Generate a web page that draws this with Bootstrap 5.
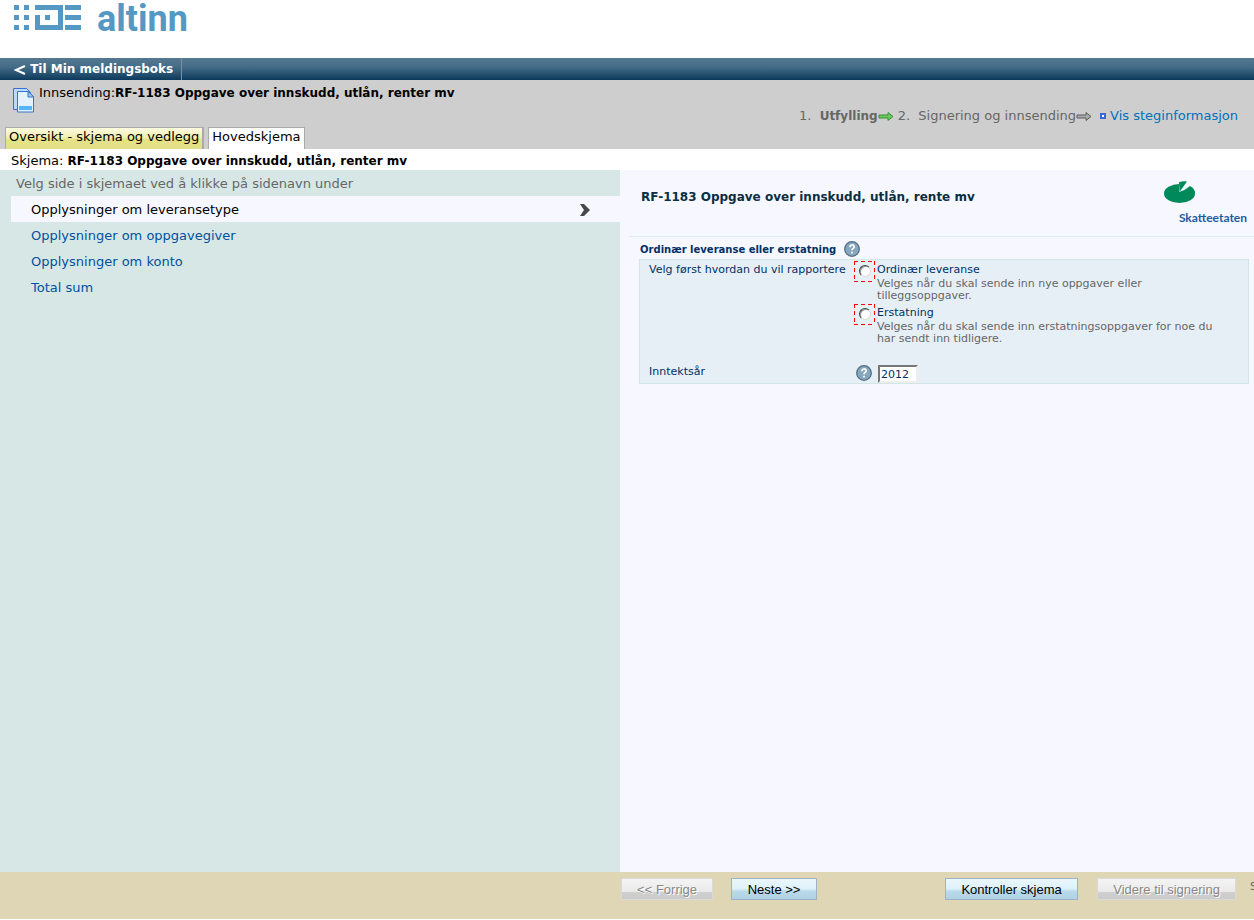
<!DOCTYPE html>
<html lang="no">
<head>
<meta charset="utf-8">
<meta name="viewport" content="width=device-width, initial-scale=1">
<title>Altinn – RF-1183</title>
<link href="https://cdn.jsdelivr.net/npm/bootstrap@5.3.0/dist/css/bootstrap.min.css" rel="stylesheet">
<style>
body{font:13px/16px "DejaVu Sans",Verdana,sans-serif;color:#000;background:#fff}
a{text-decoration:none}
b{font-size:12px}
h1,h2,p{font-size:13px;line-height:16px;margin:0}
.brandbar{height:58px;padding:0 13px;gap:15px}
.brandword{font:700 36px/38px Roboto,sans-serif;color:#5598c3}
.topnav{height:22px;background:linear-gradient(#557892,#456d88 40%,#0c3a5c);padding:0}
.topnav a{color:#fff;font-weight:700;font-size:12px;line-height:22px;padding:0 8px 0 14px;border-right:1px solid #7c8f9d}
.sendbar{height:69px;background:#cecece;padding:0 16px 0 5px}
.sendtitle{padding-top:5px}
.steps{color:#666;padding-top:28px;white-space:nowrap}
.steps a{color:#0072bc}
.tabbtn{border:1px solid #aaa;border-bottom:0;height:22px;line-height:18px;padding:0 3px;color:#000;background:#fff}
.tabbtn.current{background:linear-gradient(#fcfbe0,#f1efac 48%,#e6e285 52%,#e3df88);border-right-width:2px}
.schemabar{height:21px;padding:4px 11px 1px;line-height:16px}
.pages{width:49.45%;background:#d6e7e6}
.pages p{color:#666;padding:6px 16px 4px}
.pages a{color:#00519e;line-height:24px;padding-top:2px;padding-left:20px;margin-left:11px}
.pages a.current{background:#f6f7ff;color:#000;padding-right:30px}
.formpane{background:#f6f7ff;min-width:0}
.formhead{height:67px;margin-left:9px;padding:4px 7px 0 12px;border-bottom:1px solid #dbeeed}
.formhead h1{color:#0a2f45;font-weight:700;font-size:12px;padding-top:15px}
.agency{font:700 12px/14px Lato,sans-serif;color:#1d5b9f;padding-top:5px}
.formbody{padding:4px 5px 0 19px;color:#003164;font-size:11px;line-height:12px}
.formbody h2{font-size:10px;font-weight:700;color:#003164;line-height:18px;padding-left:1px}
.fields{background:#e6eff6;border:1px solid #d3e6e6;min-height:125px;grid-template-columns:205px 1fr;align-content:start;padding:1px 9px 0}
.fields .lbl{padding-top:3px;white-space:nowrap}
.req{width:21px;height:21px;flex:none;margin-right:2px;background:repeating-linear-gradient(90deg,#f00 0 4px,transparent 4px 7px) top/100% 1px no-repeat,repeating-linear-gradient(90deg,#f00 0 4px,transparent 4px 7px) bottom/100% 1px no-repeat,repeating-linear-gradient(#f00 0 4px,transparent 4px 7px) left/1px 100% no-repeat,repeating-linear-gradient(#f00 0 4px,transparent 4px 7px) right/1px 100% no-repeat}
.req input{appearance:none;width:12px;height:12px;margin:4px 5px;display:block;border-radius:50%;background:#fff;border:1px solid #e0dcd2;border-top-color:#404040;border-left-color:#404040;box-shadow:inset 1px 1px 0 #999}
.req input:checked{background:radial-gradient(#000 2px,#fff 3px)}
.choice{margin-bottom:2px}
.choice label{display:block;padding-top:3px;line-height:12px}
.choice small{display:block;font-size:11px;line-height:12px;color:#666;padding-top:2px;max-width:356px}
.yearrow{margin-top:18px;padding-left:2px;gap:6px}
.year{width:40px;height:18px;border:2px solid;border-color:#777 #eee #eee #777;background:#fff;font-size:11px;color:#003164;padding:0 1px;border-radius:0}
.qbtn{border:0;background:none;padding:0;width:16px;height:16px;display:block}
svg{display:block}
.actions{height:47px;background:#ded6b5;margin-bottom:1px;padding:6px 0 0 49.45%;overflow:hidden;white-space:nowrap}
.actbtn{font:13px/18px "Liberation Sans",Arial,sans-serif;border:1px solid #9bb3c4;border-radius:0;height:22px;padding:1px 0 0;color:#000;background:linear-gradient(#ebf7fc,#dff1fa 48%,#bad9e9 62%,#afd2e4);flex:none;margin-left:18px;width:86px}
.actbtn:disabled{color:#888;text-shadow:1px 1px 0 #fff;opacity:1;border-color:#d9d9d9;background:linear-gradient(#f4f4f4,#eaeaea 62%,#cecece 68%,#cbcbcb)}
.w-prev{width:92px;margin-left:1px}.w-check{width:133px;margin-left:128px}.w-sign{width:139px;margin-left:19px}
.status{font-size:11px;color:#666;margin-left:14px;padding-top:1px}
</style>
</head>
<body class="d-flex flex-column min-vh-100">
<header>
  <div class="brandbar d-flex align-items-start">
    <svg class="mt-1" width="69" height="28" viewBox="0 0 69 28" fill="#5598c3" aria-hidden="true">
      <path d="M1 1h5v5h-5zM11 1h5v5h-5zM1 11h5v5h-5zM11 11h5v5h-5zM1 21h5v5h-5zM11 21h5v5h-5zM22 1h28v20h-5v-15h-23zM22 11h5v10h23v5h-28zM32 11h5v5h-5zM52 1h16v5h-16zM52 11h16v5h-16zM52 21h16v5h-16z"/>
    </svg>
    <span class="brandword">altinn</span>
  </div>
  <nav class="topnav d-flex"><a href="#"><svg class="d-inline-block" width="12" height="10" viewBox="0 0 12 10" fill="none" stroke="#fff" stroke-width="2"><path d="M11 1L2 5L11 9"/></svg> Til Min meldingsboks</a></nav>
  <div class="sendbar d-flex justify-content-between">
    <div class="d-flex flex-column justify-content-between">
      <div class="d-flex">
        <svg class="ms-2 mt-2 me-1" width="22" height="25" viewBox="0 0 22 25"><path d="M.5.5h13l4 4v17h-17z" fill="#b9dafc" stroke="#3274cf"/><path d="M4.500 3.500h11l5 5v15.500h-16z" fill="#e4f1ff" stroke="#3274cf"/><path d="M15 3.500v5.500h6z" fill="#9ccaf8" stroke="#3274cf"/><path d="M6 18h13v4h-13z" fill="#55b6f7"/></svg>
        <div class="sendtitle">Innsending:<b>RF-1183 Oppgave over innskudd, utlån, renter mv</b></div>
      </div>
      <nav class="d-flex gap-1"><a class="tabbtn current" href="#">Oversikt - skjema og vedlegg</a><a class="tabbtn" href="#">Hovedskjema</a></nav>
    </div>
    <div class="steps d-flex align-items-start">
      <span>1.&nbsp; <b>Utfylling</b></span>
      <svg class="mt-1 me-1" width="16" height="9" viewBox="0 0 16 9"><path d="M1 3h9V.5l5 4-5 4V6h-9z" fill="#67c957" stroke="#3c8f3a"/></svg>
      <span>2.&nbsp; Signering og innsending</span>
      <svg class="mt-1 me-2" width="16" height="9" viewBox="0 0 16 9"><path d="M1 3h9V.5l5 4-5 4V6h-9z" fill="#aaa" stroke="#5c5c5c"/></svg>
      <a class="d-flex" href="#"><svg class="mt-1 me-1" width="6" height="7" viewBox="0 0 6 7"><path d="M0 1h6v6h-6z" fill="#346bd1"/><path d="M2 3h2v2h-2z" fill="#fff"/></svg>Vis steginformasjon</a>
    </div>
  </div>
  <div class="schemabar">Skjema: <b>RF-1183 Oppgave over innskudd, utlån, renter mv</b></div>
</header>
<main class="d-flex flex-grow-1">
  <nav class="pages d-flex flex-column flex-shrink-0">
    <p>Velg side i skjemaet ved å klikke på sidenavn under</p>
    <a class="current d-flex justify-content-between align-items-center" href="#">Opplysninger om leveransetype<svg width="10" height="12" viewBox="0 0 10 12"><path d="M0 0h4l6 6-6 6h-4l4-6z" fill="#484848"/></svg></a>
    <a href="#">Opplysninger om oppgavegiver</a>
    <a href="#">Opplysninger om konto</a>
    <a href="#">Total sum</a>
  </nav>
  <form class="formpane flex-grow-1">
    <div class="formhead d-flex justify-content-between">
      <h1>RF-1183 Oppgave over innskudd, utlån, rente mv</h1>
      <div class="d-flex flex-column align-items-end flex-shrink-0">
        <svg width="84" height="32" viewBox="0 0 84 32"><ellipse cx="16.500" cy="19.500" rx="15.500" ry="9.500" fill="#008a5b"/><path d="M16 18V6h14v7z" fill="#f6f7ff"/><path d="M16 8.200q4-1.200 8-.7L16.500 18z" fill="#008a5b"/><path d="M18 18.500L27 12q5 3 5 7.500l-8 3z" fill="#008a5b"/></svg>
        <span class="agency">Skatteetaten</span>
      </div>
    </div>
    <div class="formbody">
      <div class="d-flex gap-2">
        <h2>Ordinær leveranse eller erstatning</h2>
        <button type="button" class="qbtn" aria-label="Hjelp"><svg width="16" height="16" viewBox="0 0 16 16"><circle cx="8" cy="8" r="7.300" fill="#86a7bd" stroke="#536f82" stroke-width="1.300"/><path d="M6 6.200c0-3 4.200-2.800 4.200-.4C10.200 7.500 8 7.300 8 9.300M8 10.800v1.700" fill="none" stroke="#fff" stroke-width="1.700"/></svg></button>
      </div>
      <div class="fields d-grid">
        <div class="lbl" id="how">Velg først hvordan du vil rapportere</div>
        <div role="radiogroup" aria-labelledby="how">
          <div class="choice d-flex"><span class="req"><input type="radio" name="kind" id="ord"></span><div><label for="ord">Ordinær leveranse</label><small>Velges når du skal sende inn nye oppgaver eller tilleggsoppgaver.</small></div></div>
          <div class="choice d-flex"><span class="req"><input type="radio" name="kind" id="ers"></span><div><label for="ers">Erstatning</label><small>Velges når du skal sende inn erstatningsoppgaver for noe du har sendt inn tidligere.</small></div></div>
        </div>
        <label class="lbl mt-3" for="year">Inntektsår</label>
        <div class="yearrow d-flex"><button type="button" class="qbtn" aria-label="Hjelp"><svg width="16" height="16" viewBox="0 0 16 16"><circle cx="8" cy="8" r="7.300" fill="#86a7bd" stroke="#536f82" stroke-width="1.300"/><path d="M6 6.200c0-3 4.200-2.800 4.200-.4C10.200 7.500 8 7.300 8 9.300M8 10.800v1.700" fill="none" stroke="#fff" stroke-width="1.700"/></svg></button><input class="year" id="year" type="text" value="2012"></div>
      </div>
    </div>
  </form>
</main>
<footer class="actions d-flex align-items-start">
  <button class="actbtn w-prev" disabled>&lt;&lt; Forrige</button>
  <button class="actbtn">Neste &gt;&gt;</button>
  <button class="actbtn w-check">Kontroller skjema</button>
  <button class="actbtn w-sign" disabled>Videre til signering</button>
  <span class="status">S</span>
</footer>
<script src="https://cdn.jsdelivr.net/npm/bootstrap@5.3.0/dist/js/bootstrap.bundle.min.js"></script>
</body>
</html>
